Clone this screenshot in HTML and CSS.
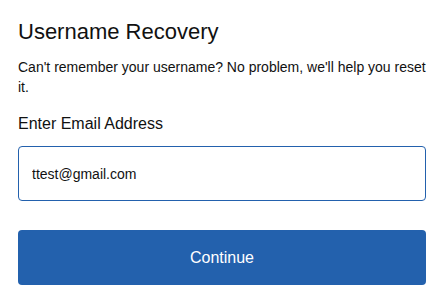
FILE: index.html
```html
<!DOCTYPE html>
<html lang="en">
<head>
  <meta charset="UTF-8" />
  <meta name="viewport" content="width=device-width, initial-scale=1.0"/>
  <title>Username Recovery</title>
  <link rel="stylesheet" href="styles.css">
</head>
<body>
  <div class="recovery">
    <h1 class="title">Username Recovery</h1>
    <p class="intro">Can't remember your username? No problem, we'll help you reset it.</p>

    <form class="recovery-form">
      <label for="email" class="field-label">Enter Email Address</label>
      <input type="email" id="email" class="field-input" value="ttest@gmail.com" />
      <button type="submit" class="continue-button">Continue</button>
    </form>
  </div>
</body>
</html>
```

FILE: styles.css
```css
* {
  margin: 0;
  padding: 0;
  box-sizing: border-box;
}

html, body {
  background-color: #fff;
  font-family: 'Liberation Sans', Arial, Helvetica, sans-serif;
  color: #111;
}

.recovery {
  width: 408px;
  margin-left: 18px;
  padding-top: 19px;
}

.title {
  font-size: 22px;
  font-weight: 400;
  line-height: 26px;
  color: #111;
}

.intro {
  margin-top: 12px;
  font-size: 14px;
  line-height: 20px;
}

.recovery-form {
  display: flex;
  flex-direction: column;
  margin-top: 17px;
}

.field-label {
  font-size: 16px;
  line-height: 20px;
}

.field-input {
  margin-top: 12px;
  height: 55px;
  padding: 0 13px;
  border: 1px solid #2361ad;
  border-radius: 4px;
  font-family: inherit;
  font-size: 14px;
  color: #111;
  background-color: #fff;
  outline: none;
}

.continue-button {
  margin-top: 29px;
  height: 55px;
  border: none;
  border-radius: 4px;
  background-color: #2361ad;
  color: #fff;
  font-family: inherit;
  font-size: 16px;
  cursor: pointer;
}
```
